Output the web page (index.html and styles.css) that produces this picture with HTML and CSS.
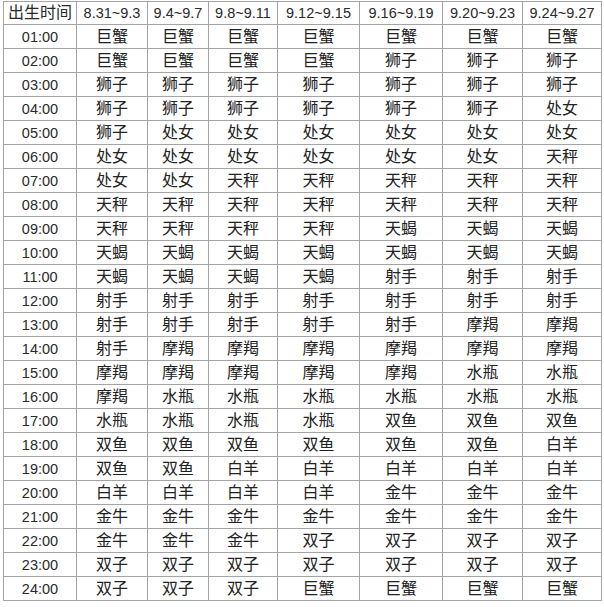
FILE: index.html
```html
<!DOCTYPE html>
<html lang="zh">
<head>
<meta charset="utf-8">
<title>出生时间星座表</title>
<link rel="stylesheet" href="styles.css">
</head>
<body>
<table class="zodiac">
<colgroup>
<col class="c0"><col class="c1"><col class="c2"><col class="c3"><col class="c4"><col class="c5"><col class="c6"><col class="c7">
</colgroup>
<thead>
<tr><th class="first">出生时间</th><th>8.31~9.3</th><th>9.4~9.7</th><th>9.8~9.11</th><th>9.12~9.15</th><th>9.16~9.19</th><th>9.20~9.23</th><th>9.24~9.27</th></tr>
</thead>
<tbody>
<tr><td class="t">01:00</td><td>巨蟹</td><td>巨蟹</td><td>巨蟹</td><td>巨蟹</td><td>巨蟹</td><td>巨蟹</td><td>巨蟹</td></tr>
<tr><td class="t">02:00</td><td>巨蟹</td><td>巨蟹</td><td>巨蟹</td><td>巨蟹</td><td>狮子</td><td>狮子</td><td>狮子</td></tr>
<tr><td class="t">03:00</td><td>狮子</td><td>狮子</td><td>狮子</td><td>狮子</td><td>狮子</td><td>狮子</td><td>狮子</td></tr>
<tr><td class="t">04:00</td><td>狮子</td><td>狮子</td><td>狮子</td><td>狮子</td><td>狮子</td><td>狮子</td><td>处女</td></tr>
<tr><td class="t">05:00</td><td>狮子</td><td>处女</td><td>处女</td><td>处女</td><td>处女</td><td>处女</td><td>处女</td></tr>
<tr><td class="t">06:00</td><td>处女</td><td>处女</td><td>处女</td><td>处女</td><td>处女</td><td>处女</td><td>天秤</td></tr>
<tr><td class="t">07:00</td><td>处女</td><td>处女</td><td>天秤</td><td>天秤</td><td>天秤</td><td>天秤</td><td>天秤</td></tr>
<tr><td class="t">08:00</td><td>天秤</td><td>天秤</td><td>天秤</td><td>天秤</td><td>天秤</td><td>天秤</td><td>天秤</td></tr>
<tr><td class="t">09:00</td><td>天秤</td><td>天秤</td><td>天秤</td><td>天秤</td><td>天蝎</td><td>天蝎</td><td>天蝎</td></tr>
<tr><td class="t">10:00</td><td>天蝎</td><td>天蝎</td><td>天蝎</td><td>天蝎</td><td>天蝎</td><td>天蝎</td><td>天蝎</td></tr>
<tr><td class="t">11:00</td><td>天蝎</td><td>天蝎</td><td>天蝎</td><td>天蝎</td><td>射手</td><td>射手</td><td>射手</td></tr>
<tr><td class="t">12:00</td><td>射手</td><td>射手</td><td>射手</td><td>射手</td><td>射手</td><td>射手</td><td>射手</td></tr>
<tr><td class="t">13:00</td><td>射手</td><td>射手</td><td>射手</td><td>射手</td><td>射手</td><td>摩羯</td><td>摩羯</td></tr>
<tr><td class="t">14:00</td><td>射手</td><td>摩羯</td><td>摩羯</td><td>摩羯</td><td>摩羯</td><td>摩羯</td><td>摩羯</td></tr>
<tr><td class="t">15:00</td><td>摩羯</td><td>摩羯</td><td>摩羯</td><td>摩羯</td><td>摩羯</td><td>水瓶</td><td>水瓶</td></tr>
<tr><td class="t">16:00</td><td>摩羯</td><td>水瓶</td><td>水瓶</td><td>水瓶</td><td>水瓶</td><td>水瓶</td><td>水瓶</td></tr>
<tr><td class="t">17:00</td><td>水瓶</td><td>水瓶</td><td>水瓶</td><td>水瓶</td><td>双鱼</td><td>双鱼</td><td>双鱼</td></tr>
<tr><td class="t">18:00</td><td>双鱼</td><td>双鱼</td><td>双鱼</td><td>双鱼</td><td>双鱼</td><td>双鱼</td><td>白羊</td></tr>
<tr><td class="t">19:00</td><td>双鱼</td><td>双鱼</td><td>白羊</td><td>白羊</td><td>白羊</td><td>白羊</td><td>白羊</td></tr>
<tr><td class="t">20:00</td><td>白羊</td><td>白羊</td><td>白羊</td><td>白羊</td><td>金牛</td><td>金牛</td><td>金牛</td></tr>
<tr><td class="t">21:00</td><td>金牛</td><td>金牛</td><td>金牛</td><td>金牛</td><td>金牛</td><td>金牛</td><td>金牛</td></tr>
<tr><td class="t">22:00</td><td>金牛</td><td>金牛</td><td>金牛</td><td>双子</td><td>双子</td><td>双子</td><td>双子</td></tr>
<tr><td class="t">23:00</td><td>双子</td><td>双子</td><td>双子</td><td>双子</td><td>双子</td><td>双子</td><td>双子</td></tr>
<tr><td class="t">24:00</td><td>双子</td><td>双子</td><td>双子</td><td>巨蟹</td><td>巨蟹</td><td>巨蟹</td><td>巨蟹</td></tr>
</tbody>
</table>
</body>
</html>
```
FILE: styles.css
```css
html, body {
  margin: 0;
  padding: 0;
  background: #ffffff;
}

body {
  padding: 1px 0 0 3px;
}

.zodiac {
  border-collapse: collapse;
  table-layout: fixed;
  width: 598px;
  font-family: "Liberation Sans", "Noto Sans CJK SC", sans-serif;
  font-size: 16px;
  color: #222222;
}

.c0 { width: 73px; }
.c1 { width: 71px; }
.c2 { width: 61px; }
.c3 { width: 69px; }
.c4 { width: 82px; }
.c5 { width: 83px; }
.c6 { width: 80px; }
.c7 { width: 79px; }

.zodiac th,
.zodiac td {
  border: 1px solid #a4a4a4;
  height: 23px;
  padding: 0;
  text-align: center;
  vertical-align: middle;
  font-weight: normal;
  line-height: 22px;
  white-space: nowrap;
  overflow: hidden;
}

.zodiac th {
  height: 22px;
  font-size: 14.5px;
  color: #2a2a2a;
}

.zodiac th.first {
  font-size: 16px;
}

.zodiac td.t {
  font-size: 14.5px;
  color: #2a2a2a;
}
```
